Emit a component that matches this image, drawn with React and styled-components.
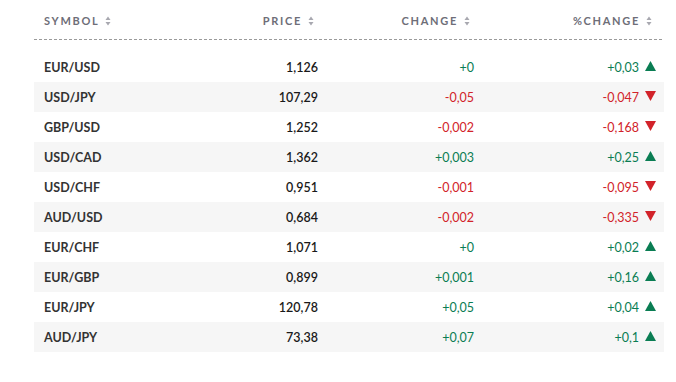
import React from "react";
import styled, { createGlobalStyle } from "styled-components";

const Global = createGlobalStyle`
  html, body { margin: 0; padding: 0; background: #fff; }
  body { font-family: "Lato", "Open Sans", sans-serif; }
`;

const Wrap = styled.div`
  padding: 0 12px 0 34px;
  width: 630px;
`;

const Grid = styled.div`
  display: grid;
  grid-template-columns: 146px 146px 156px 182px;
`;

const Head = styled(Grid)`
  height: 39px;
  align-items: center;
  padding-top: 2px;
  box-sizing: border-box;
`;

const HeadCell = styled.div`
  display: flex;
  align-items: center;
  justify-content: ${(p) => (p.$left ? "flex-start" : "flex-end")};
  padding: ${(p) => (p.$left ? "0 0 0 10px" : "0 12px 0 0")};
  font-size: 11px;
  font-weight: 700;
  letter-spacing: 1.7px;
  color: #6e6e78;
`;

const SortIcon = styled.svg`
  margin-left: 6px;
  width: 6px;
  height: 10px;
`;

const Dash = styled.div`
  height: 1px;
  background: repeating-linear-gradient(to right, #9a9a9a 0 3px, transparent 3px 5px);
  margin-bottom: 12px;
`;

const Row = styled(Grid)`
  height: 30px;
  align-items: center;
  background: ${(p) => (p.$alt ? "#f6f6f6" : "#fff")};
`;

const Cell = styled.div`
  font-size: 12.5px;
  padding: ${(p) => (p.$left ? "0 0 0 10px" : "0 8px 0 0")};
  font-weight: ${(p) => p.$weight || 400};
  color: ${(p) => p.$color || "#222"};
  display: flex;
  align-items: center;
  justify-content: ${(p) => (p.$left ? "flex-start" : "flex-end")};
`;

const Tri = styled.svg`
  width: 11px;
  height: 10px;
  margin-left: 6px;
  margin-bottom: 2px;
`;

const GREEN = "#0a7d53";
const RED = "#d2232a";

const data = [
  ["EUR/USD", "1,126", "+0", "+0,03"],
  ["USD/JPY", "107,29", "-0,05", "-0,047"],
  ["GBP/USD", "1,252", "-0,002", "-0,168"],
  ["USD/CAD", "1,362", "+0,003", "+0,25"],
  ["USD/CHF", "0,951", "-0,001", "-0,095"],
  ["AUD/USD", "0,684", "-0,002", "-0,335"],
  ["EUR/CHF", "1,071", "+0", "+0,02"],
  ["EUR/GBP", "0,899", "+0,001", "+0,16"],
  ["EUR/JPY", "120,78", "+0,05", "+0,04"],
  ["AUD/JPY", "73,38", "+0,07", "+0,1"],
];

const Sort = () => (
  <SortIcon viewBox="0 0 6 10">
    <path d="M3 0.5 L5.5 4 L0.5 4 Z" fill="#a8a8b0" />
    <path d="M3 9.5 L5.5 6 L0.5 6 Z" fill="#a8a8b0" />
  </SortIcon>
);

export default function App() {
  return (
    <>
      <Global />
      <Wrap>
        <Head>
          <HeadCell $left>SYMBOL<Sort /></HeadCell>
          <HeadCell>PRICE<Sort /></HeadCell>
          <HeadCell>CHANGE<Sort /></HeadCell>
          <HeadCell>%CHANGE<Sort /></HeadCell>
        </Head>
        <Dash />
        {data.map(([s, p, c, pc], i) => {
          const up = c.startsWith("+");
          const col = up ? GREEN : RED;
          return (
            <Row key={s} $alt={i % 2 === 1}>
              <Cell $left $weight={700} $color="#333">{s}</Cell>
              <Cell $weight={600} $color="#1a1a1a">{p}</Cell>
              <Cell $color={col}>{c}</Cell>
              <Cell $color={col}>
                {pc}
                <Tri viewBox="0 0 11 10">
                  {up ? (
                    <path d="M5.5 0 L11 10 L0 10 Z" fill={GREEN} />
                  ) : (
                    <path d="M0 0 L11 0 L5.5 10 Z" fill={RED} />
                  )}
                </Tri>
              </Cell>
            </Row>
          );
        })}
      </Wrap>
    </>
  );
}
